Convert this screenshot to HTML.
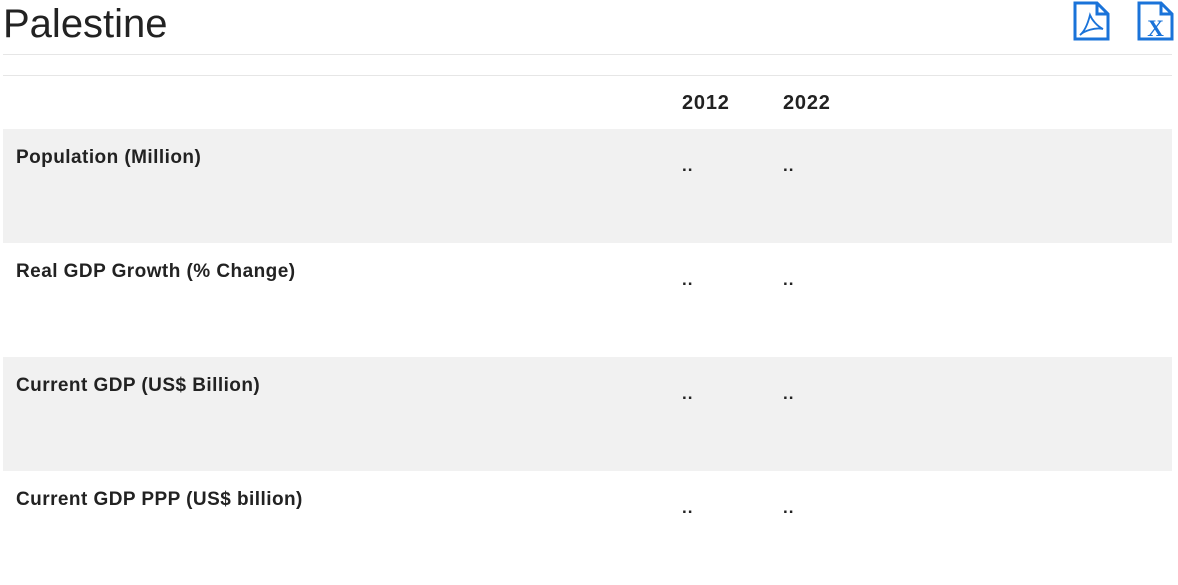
<!DOCTYPE html>
<html><head><style>
body{margin:0;width:1178px;height:573px;background:#fff;font-family:"Liberation Sans",sans-serif;color:#222;position:relative;overflow:hidden}
.a{position:absolute}
h1{position:absolute;left:3px;top:1px;margin:0;font-weight:400;font-size:40px;line-height:46px;color:#222}
.line{position:absolute;left:3px;width:1169px;height:1px;background:#e6e6e6}
.row{position:absolute;left:3px;width:1169px;height:114px}
.g{background:#f1f1f1}
.lbl{position:absolute;left:13px;top:18px;font-weight:bold;font-size:19px;letter-spacing:0.45px}
.d{position:absolute;top:27px;font-size:17px;font-weight:bold;letter-spacing:1px}
.hd{position:absolute;top:92px;font-weight:bold;font-size:20px;letter-spacing:0.8px}
</style></head><body>
<h1>Palestine</h1>
<svg class="a" style="left:1073px;top:1px" width="37" height="40" viewBox="0 0 37 40" fill="none" stroke="#1a73d9" stroke-width="3">
<path d="M2 2H24L35 13V38H2Z"/><path d="M24 2V13H35"/>
<path d="M17 14C15 22 12 30 7 34C11 30 22 26 30 28C24 25 19 19 17 14Z" stroke-width="1.8"/>
</svg>
<svg class="a" style="left:1137px;top:1px" width="37" height="40" viewBox="0 0 37 40" fill="none" stroke="#1a73d9" stroke-width="3">
<path d="M2 2H24L35 13V38H2Z"/><path d="M24 2V13H35"/>
<text x="18.5" y="35" text-anchor="middle" font-family="Liberation Serif,serif" font-weight="bold" font-size="23" fill="#1a73d9" stroke="none">X</text>
</svg>
<div class="line" style="top:54px"></div>
<div class="line" style="top:75px"></div>
<div class="hd" style="left:682px">2012</div>
<div class="hd" style="left:783px">2022</div>
<div class="row g" style="top:129px"><div class="lbl">Population (Million)</div><div class="d" style="left:679px">..</div><div class="d" style="left:780px">..</div></div>
<div class="row" style="top:243px"><div class="lbl">Real GDP Growth (% Change)</div><div class="d" style="left:679px">..</div><div class="d" style="left:780px">..</div></div>
<div class="row g" style="top:357px"><div class="lbl">Current GDP (US$ Billion)</div><div class="d" style="left:679px">..</div><div class="d" style="left:780px">..</div></div>
<div class="row" style="top:471px"><div class="lbl">Current GDP PPP (US$ billion)</div><div class="d" style="left:679px">..</div><div class="d" style="left:780px">..</div></div>
</body></html>
